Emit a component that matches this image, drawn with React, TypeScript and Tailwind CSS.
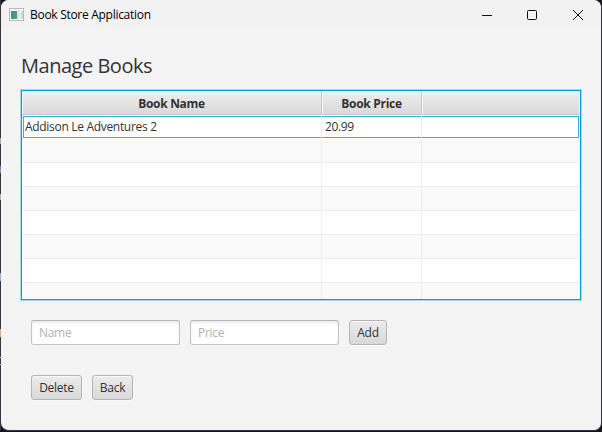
import React from 'react';

const emptyRows = [
  'bg-[#f9f9f9]',
  'bg-white',
  'bg-[#f9f9f9]',
  'bg-white',
  'bg-[#f9f9f9]',
  'bg-white',
];

const headerCell =
  'flex h-full items-center justify-center border-r border-[#c8c8c8] bg-linear-to-b from-[#efefef] to-[#d9d9d9] pt-[3px] font-bold shadow-[inset_1px_1px_0_#f8f8f8]';

const buttonStyle =
  'flex h-[25px] items-center justify-center rounded-[3px] border border-[#b5b5b5] bg-linear-to-b from-[#ececec] to-[#d9d9d9] text-[12px] tracking-[-0.25px] text-[#333333] shadow-[inset_0_1px_0_#fafafa,0_1px_0_#fafafa]';

const fieldStyle =
  'h-[25px] w-[149px] rounded-[3px] border border-[#c4c4c4] border-t-[#b4b4b4] bg-white px-[7px] text-[12px] tracking-[-0.3px] text-[#333333] shadow-[inset_0_2px_2px_#ececec] outline-none placeholder:text-[#b2b2b2]';

function TitleBar() {
  return (
    <header className="flex h-[29px] items-center bg-[#f2f2f2] pl-2">
      <svg width="16" height="14" viewBox="0 0 16 14" className="shrink-0">
        <defs>
          <linearGradient id="screen" x1="0" y1="0" x2="0.6" y2="1">
            <stop offset="0" stopColor="#5b84a8" />
            <stop offset="1" stopColor="#43a078" />
          </linearGradient>
        </defs>
        <rect x="0.5" y="0.5" width="14" height="12" fill="#f4f6f8" stroke="#b4bac0" />
        <rect x="2" y="3" width="6" height="8" fill="url(#screen)" />
        <rect x="8" y="2" width="3" height="9" fill="#dce4e6" />
        <rect x="12" y="3" width="2" height="8" fill="#c8dcd6" />
      </svg>
      <span className="ml-[5px] pt-px text-[12px] tracking-[-0.29px] text-black">Book Store Application</span>
      <svg width="102" height="10" viewBox="0 0 102 10" className="mr-[17px] ml-auto" fill="none" stroke="#111111">
        <path d="M0 5.5h10" />
        <rect x="45.5" y="0.5" width="9" height="9" rx="1" />
        <path d="M91 0l10 10M101 0l-10 10" />
      </svg>
    </header>
  );
}

function BooksTable() {
  return (
    <div className="h-[212px] w-[562px] border border-[#a3d9ea]">
      <div className="h-[210px] overflow-hidden border border-[#039ed3] bg-white text-[12px] text-[#333333]">
        <div className="grid h-6 grid-cols-[300px_100px_158px] border-b border-[#c8c8c8]">
          <div className={headerCell}><span className="tracking-[-0.29px]">Book Name</span></div>
          <div className={headerCell}><span className="tracking-[-0.29px]">Book Price</span></div>
          <div className="bg-linear-to-b from-[#efefef] to-[#d9d9d9] shadow-[inset_1px_1px_0_#f8f8f8,inset_-1px_0_0_#f8f8f8]" />
        </div>
        <div className="grid h-6 grid-cols-[298px_1px_99px_1px_157px] px-px py-px">
          <div className="flex items-center border border-r-0 border-[#30b0d8] pb-px pl-px"><span className="tracking-[-0.31px]">Addison Le Adventures 2</span></div>
          <div className="bg-[#ededed]" />
          <div className="flex items-center border-y border-[#30b0d8] pb-px pl-[3px]"><span className="tracking-[-0.4px]">20.99</span></div>
          <div className="bg-[#ededed]" />
          <div className="border border-l-0 border-[#30b0d8]" />
        </div>
        {emptyRows.map((color, index) => (
          <div key={index} className={`grid h-6 grid-cols-[300px_100px_158px] border-b border-[#ededed] ${color}`}>
            <div className="border-r border-[#ededed]" />
            <div className="border-r border-[#ededed]" />
          </div>
        ))}
        <div className="grid h-4 grid-cols-[300px_100px_158px] bg-[#f9f9f9]">
          <div className="border-r border-[#ededed]" />
          <div className="border-r border-[#ededed]" />
        </div>
      </div>
    </div>
  );
}

// Slivers of the desktop that show along the window's left side.
function DesktopEdge() {
  return (
    <div className="flex h-[430px] w-px flex-col bg-[#37353f]">
      <div className="mt-[138px] h-[6px] bg-[#9fb0b4]" />
      <div className="mt-[22px] h-[3px] bg-[#3f8fc4]" />
      <div className="h-1 bg-[#b08a70]" />
      <div className="mt-[21px] h-[6px] bg-[#a9bcbc]" />
      <div className="mt-[73px] h-2 bg-[#8ab4d8]" />
      <div className="mt-12 h-2 bg-[#cbb595]" />
      <div className="mt-5 h-px bg-[#c8c8cc]" />
      <div className="mt-[6px] h-px bg-[#c8c8cc]" />
    </div>
  );
}

export default function App() {
  return (
    <div className="flex h-[432px] w-[602px] overflow-hidden bg-[#15161c] font-['Open_Sans',sans-serif]">
      <DesktopEdge />
      <div className="h-[431px] w-[601px] rounded-lg border-r border-b border-[#34343a] bg-[#f4f4f4]">
        <div className="h-[430px] overflow-hidden rounded-lg">
          <TitleBar />
          <main className="pl-[19px]">
            <h1 className="ml-px flex h-[60px] items-center pt-[13px] text-[20px] tracking-[-0.48px] text-[#333333]">Manage Books</h1>
            <BooksTable />
            <div className="mt-[19px] ml-[11px] flex gap-[10px]">
              <input className={fieldStyle} placeholder="Name" />
              <input className={fieldStyle} placeholder="Price" />
              <button className={`${buttonStyle} w-[38px]`}>Add</button>
            </div>
            <div className="mt-[30px] ml-[11px] flex gap-[10px]">
              <button className={`${buttonStyle} w-[51px]`}>Delete</button>
              <button className={`${buttonStyle} w-[41px]`}>Back</button>
            </div>
          </main>
        </div>
      </div>
    </div>
  );
}
